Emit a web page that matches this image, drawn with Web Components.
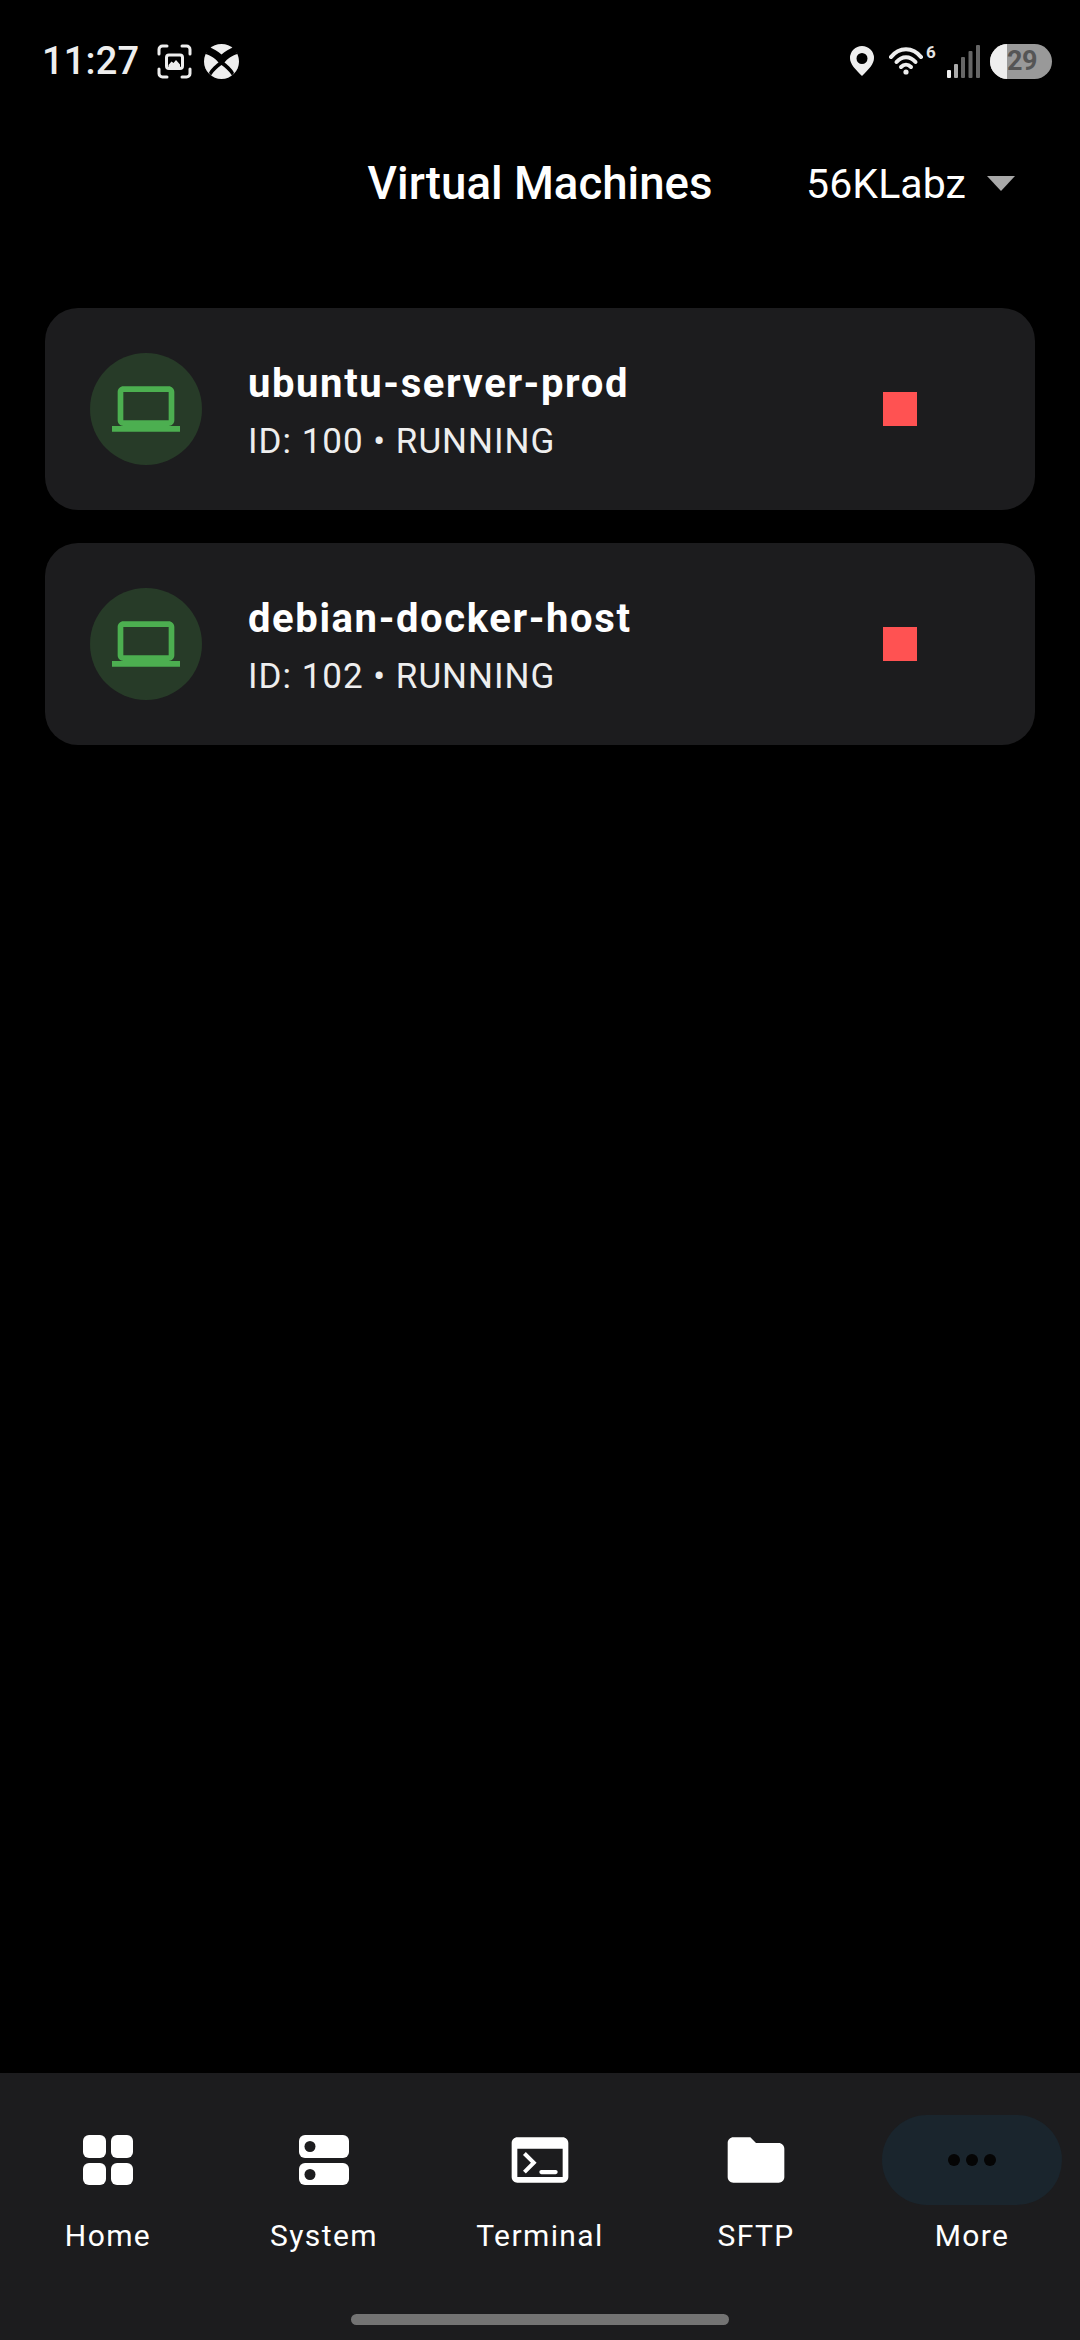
<!doctype html>
<html><head><meta charset="utf-8">
<style>
html,body{margin:0;background:#000;height:100%}
body{width:1080px;height:2340px;overflow:hidden;font-family:Roboto,"Liberation Sans",sans-serif;color:#fff}
app-shell{height:2340px}
</style></head><body>
<app-shell>
  <status-bar></status-bar>
  <app-header title="Virtual Machines" host="56KLabz"></app-header>
  <vm-list>
    <vm-card name="ubuntu-server-prod" meta="ID: 100 • RUNNING"></vm-card>
    <vm-card name="debian-docker-host" meta="ID: 102 • RUNNING"></vm-card>
  </vm-list>
  <bottom-nav>
    <nav-item label="Home" icon="home"></nav-item>
    <nav-item label="System" icon="system"></nav-item>
    <nav-item label="Terminal" icon="terminal"></nav-item>
    <nav-item label="SFTP" icon="folder"></nav-item>
    <nav-item label="More" icon="more" active></nav-item>
  </bottom-nav>
</app-shell>
<script>
const def=(name,html)=>{customElements.define(name,class extends HTMLElement{
  connectedCallback(){ if(this.shadowRoot) return; const r=this.attachShadow({mode:'open'});
    r.innerHTML=typeof html==='function'?html(this):html; }
});};
def('app-shell',`<style>:host{display:flex;flex-direction:column;width:1080px}
::slotted(bottom-nav){margin-top:auto}</style><slot></slot>`);

def('status-bar',`<style>
:host{display:flex;align-items:center;height:122px;padding:0 28px 0 42px;color:#eee;box-sizing:border-box}
.time{font:500 38px/44px Roboto,sans-serif;letter-spacing:.2px;width:115px;color:#eee}
svg{display:block;flex:none}
.shot{margin-right:12px}
.sp{flex:1}
.six{font:700 17px/14px Roboto,sans-serif;color:#e4e4e4;align-self:flex-start;margin-top:45px;margin-left:3px;width:10px}
.bat{width:62px;height:35px;border-radius:18px;overflow:hidden;display:flex;background:#999;color:#555;margin-left:10px;font:700 27px/35px Roboto,sans-serif;flex:none}
.bat i{display:block;width:17px;background:#eee}
.bat span{display:block;width:29px;text-align:center;letter-spacing:-.5px}
</style>
<span class="time">11:27</span>
<svg class="shot" width="35" height="35" viewBox="0 0 35 35" fill="none" stroke="#eee" stroke-width="3" stroke-linecap="round" stroke-linejoin="round">
  <path d="M2 10V5.500A3.500 3.500 0 0 1 5.500 2H10M25 2h4.500A3.500 3.500 0 0 1 33 5.500V10M33 25v4.500A3.500 3.500 0 0 1 29.500 33H25M10 33H5.500A3.500 3.500 0 0 1 2 29.500V25"/>
  <rect x="9.500" y="11" width="16" height="13.500" rx="2.500"/>
  <path d="M11.500 21l3-3.500 2 1.500 2.500-3 4 4.500v2.500h-11.500z" fill="#eee" stroke="none"/>
</svg>
<svg width="35" height="35" viewBox="0 0 35 35">
  <circle cx="17.500" cy="17.500" r="17.500" fill="#eee"/>
  <path d="M5 3C9.500 4.500 14 7.500 17.500 10.500 21 7.500 25.500 4.500 30 3L33.500 10C29 11 23 15 20.500 18.500 25 22 29 26 30 29L28 31.500C25 27 21 23.500 17.500 21 14 23.500 10 27 7 31.500L5 29C6 26 10 22 14.500 18.500 12 15 6 11 1.500 10Z" fill="#000"/>
</svg>
<span class="sp"></span>
<svg width="24" height="30" viewBox="0 0 24 30" style="margin-right:15px"><path fill-rule="evenodd" d="M12 0a12 12 0 0 1 12 12c0 6-5 11-12 18C5 23 0 18 0 12A12 12 0 0 1 12 0zm0 7a5.500 5.500 0 1 0 0 11 5.500 5.500 0 0 0 0-11z" fill="#eee"/></svg>
<svg width="34" height="30" viewBox="0 0 34 30" fill="none" stroke="#eee" stroke-width="4" stroke-linecap="round"><path d="M2 11C10 .5 24 .5 32 11"/><path d="M7.500 16C13 9.500 21 9.500 26.500 16"/><path d="M12 21C15 18 19 18 22 21"/><circle cx="17" cy="26" r="2.600" fill="#eee" stroke="none"/></svg>
<span class="six">6</span>
<svg width="33" height="33" viewBox="0 0 33 33" style="margin-left:11px">
  <rect x="0" y="25" width="4" height="8" rx="1" fill="#eee"/><rect x="7" y="19" width="4" height="14" rx="1" fill="#aaa"/><rect x="14" y="12" width="4" height="21" rx="1" fill="#666"/><rect x="21.500" y="6" width="4" height="27" rx="1" fill="#666"/><rect x="29" y="0" width="4" height="33" rx="1" fill="#666"/></svg>
<span class="bat"><i></i><span>29</span></span>`);

def('app-header',h=>`<style>
:host{display:grid;grid-template-columns:1fr auto 1fr;align-items:center;height:120px;box-sizing:border-box;padding-top:3px;color:#fff}
.t{grid-column:2;font:500 45.600px/52px Roboto,sans-serif;white-space:nowrap}
.r{grid-column:3;display:flex;align-items:center;justify-content:flex-end;padding-right:65px;gap:21px}
.h{font:400 41px/48px Roboto,sans-serif;letter-spacing:.1px}
svg{display:block}
</style><div class="t">${h.getAttribute('title')}</div>
<div class="r"><span class="h">${h.getAttribute('host')}</span>
<svg width="28" height="15" viewBox="0 0 28 15"><path d="M0 0h28L14 15z" fill="#a8a8a8"/></svg></div>`);

def('vm-list',`<style>:host{display:flex;flex-direction:column;gap:33px;padding:66px 45px 0}</style><slot></slot>`);

def('vm-card',h=>`<style>
:host{display:flex;align-items:center;height:202px;background:#1c1c1e;border-radius:33px;padding:0 118px 0 45px;box-sizing:border-box}
.a{width:112px;height:112px;border-radius:50%;background:#273b28;display:flex;align-items:center;justify-content:center;flex:none}
.x{flex:1;margin-left:46px;padding-top:5px;display:flex;flex-direction:column;gap:14px}
.n{font:700 40px/46px Roboto,sans-serif;color:#fff;letter-spacing:1.600px}
.m{font:400 35px/42px Roboto,sans-serif;color:#eee;letter-spacing:1px}
.s{width:34px;height:34px;background:#ff5252;flex:none}
svg{display:block}
</style>
<div class="a"><svg width="68" height="68" viewBox="0 0 24 24"><path fill="#4caf50" d="M20 18c1.100 0 2-.9 2-2V6c0-1.100-.9-2-2-2H4c-1.100 0-2 .9-2 2v10c0 1.100.9 2 2 2H0v2h24v-2h-4zM4 6h16v10H4V6z"/></svg></div>
<div class="x"><div class="n">${h.getAttribute('name')}</div><div class="m">${h.getAttribute('meta')}</div></div>
<div class="s"></div>`);

def('bottom-nav',`<style>
:host{display:flex;flex-direction:column;height:267px;background:#1c1c1e;box-sizing:border-box;padding-top:42px;align-items:center}
.row{display:grid;grid-template-columns:repeat(5,216px);width:1080px}
.bar{width:378px;height:11px;border-radius:6px;background:#737373;margin-top:60px}
</style><div class="row"><slot></slot></div><div class="bar"></div>`);

const ICONS={
 home:`<svg width="50" height="50" viewBox="0 0 50 50" fill="#fff"><rect width="23" height="23" rx="6"/><rect x="28" width="22" height="23" rx="6"/><rect y="28" width="23" height="22" rx="6"/><rect x="28" y="28" width="22" height="22" rx="6"/></svg>`,
 system:`<svg width="50" height="50" viewBox="0 0 50 50"><rect width="50" height="23" rx="6" fill="#fff"/><rect y="28" width="50" height="22" rx="6" fill="#fff"/><circle cx="11" cy="11.500" r="5.500" fill="#1c1c1e"/><circle cx="11" cy="39.500" r="5.500" fill="#1c1c1e"/></svg>`,
 terminal:`<svg width="68" height="68" viewBox="0 0 24 24" fill="#fff"><path fill-rule="evenodd" d="M20 4H4c-1.100 0-2 .9-2 2v12c0 1.100.9 2 2 2h16c1.100 0 2-.9 2-2V6c0-1.100-.9-2-2-2zm0 14H4V8h16v10z"/><path d="M7 9.200l3.800 3.800L7 16.800l-1-1L8.800 13 6 10.200zM12.500 15.500h5a.75.75 0 0 1 0 1.500h-5a.75.75 0 0 1 0-1.500z"/></svg>`,
 folder:`<svg width="68" height="68" viewBox="0 0 24 24" fill="#fff"><path d="M10 4H4c-1.100 0-1.990.9-1.990 2L2 18c0 1.100.9 2 2 2h16c1.100 0 2-.9 2-2V8c0-1.100-.9-2-2-2h-8l-2-2z"/></svg>`,
 more:`<svg width="72" height="72" viewBox="0 0 24 24" fill="#050505"><circle cx="6" cy="12" r="2"/><circle cx="12" cy="12" r="2"/><circle cx="18" cy="12" r="2"/></svg>`
};
def('nav-item',h=>`<style>
:host{display:flex;flex-direction:column;align-items:center}
.p{width:180px;height:90px;border-radius:45px;display:flex;align-items:center;justify-content:center}
:host([active]) .p{background:#1a252d}
.l{font:400 30px/36px Roboto,sans-serif;letter-spacing:1.400px;color:#fff;margin-top:13px;white-space:nowrap}
svg{display:block}
</style><div class="p">${ICONS[h.getAttribute('icon')]}</div><div class="l">${h.getAttribute('label')}</div>`);
</script>
</body></html>
